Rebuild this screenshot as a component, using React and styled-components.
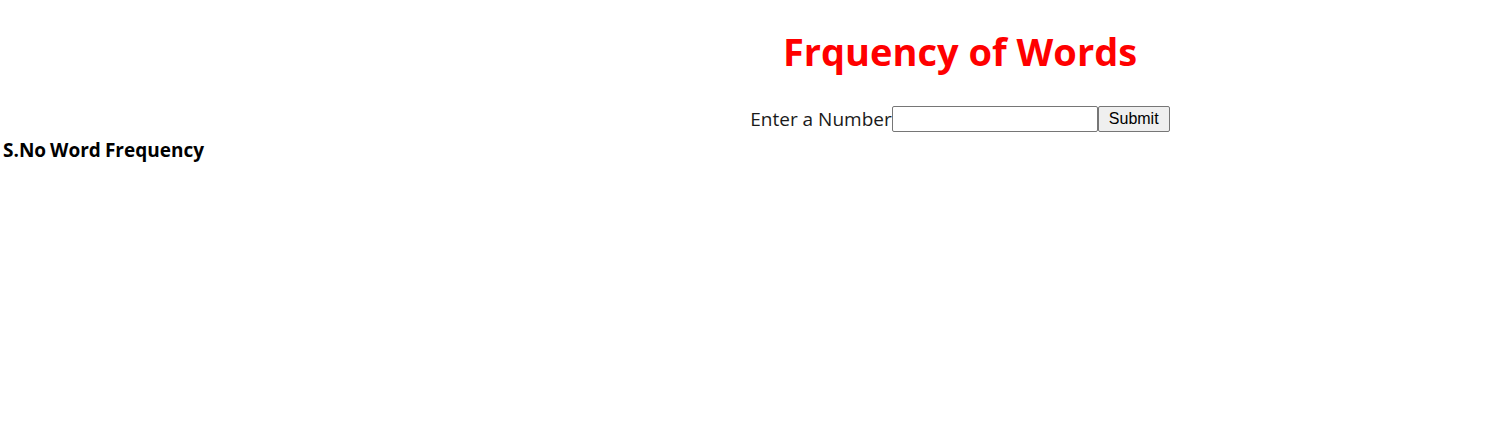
import React from "react";
import styled, { createGlobalStyle } from "styled-components";

const Global = createGlobalStyle`
  html, body { margin: 0; padding: 0; background: #fff; }
  body { font-family: "Open Sans", "Noto Sans", sans-serif; color: #000; }
`;

const Page = styled.div`
  width: 100%;
`;

const Header = styled.header`
  text-align: center;
  padding-left: 435px;
`;

const Title = styled.h1`
  margin: 0;
  padding-top: 22px;
  font-size: 38px;
  font-weight: 700;
  line-height: 58px;
  color: #ff0000;
`;

const Form = styled.form`
  display: flex;
  justify-content: center;
  align-items: center;
  margin-top: 26px;
  height: 26px;
`;

const Label = styled.label`
  font-size: 19px;
  color: #1a1a1a;
`;

const Input = styled.input`
  box-sizing: border-box;
  width: 206px;
  height: 26px;
  margin: 0;
  border: 1px solid #767676;
  border-radius: 2px;
  padding: 1px 2px;
  font-size: 16px;
`;

const Button = styled.button`
  box-sizing: border-box;
  height: 26px;
  width: 72px;
  margin: 0;
  padding: 0 6px;
  font-family: "Liberation Sans", Arial, sans-serif;
  font-size: 16px;
  background: #efefef;
  border: 1px solid #767676;
  border-radius: 2px;
  color: #000;
`;

const Table = styled.table`
  border-spacing: 2px;
  margin-top: 2px;
`;

const Th = styled.th`
  padding: 1px;
  font-size: 19px;
  font-weight: 700;
  text-align: left;
`;

export default function App() {
  return (
    <>
      <Global />
      <Page>
        <Header>
          <Title>Frquency of Words</Title>
          <Form onSubmit={(e) => e.preventDefault()}>
            <Label>Enter a Number</Label>
            <Input type="number" />
            <Button type="submit">Submit</Button>
          </Form>
        </Header>
        <Table>
          <thead>
            <tr>
              <Th>S.No</Th>
              <Th>Word</Th>
              <Th>Frequency</Th>
            </tr>
          </thead>
        </Table>
      </Page>
    </>
  );
}
